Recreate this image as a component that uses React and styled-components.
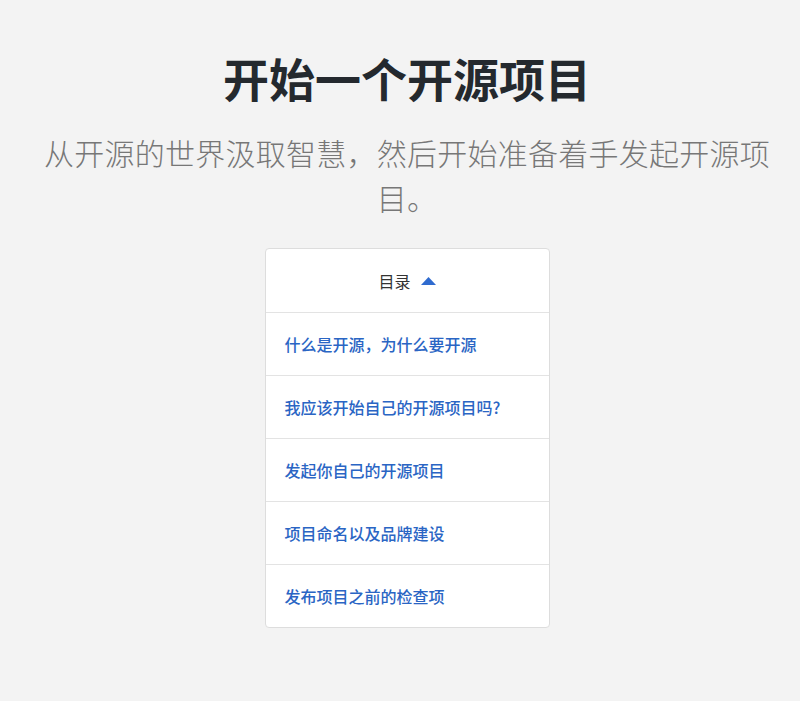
import React from 'react';
import styled, { createGlobalStyle } from 'styled-components';

const GlobalStyle = createGlobalStyle`
  body {
    margin: 0;
    background: #f3f3f3;
    font-family: "Noto Sans CJK SC", "Noto Sans", sans-serif;
  }
`;

const Hero = styled.div`
  display: flex;
  flex-direction: column;
  align-items: center;
  padding: 50px 20px 60px 34px;
`;

const Title = styled.h1`
  margin: 0;
  font-size: 46px;
  font-weight: 700;
  line-height: 1.2;
  color: #24292e;
`;

const Lead = styled.p`
  margin: 25px 0 0;
  max-width: 746px;
  text-align: center;
  font-size: 30px;
  font-weight: 200;
  line-height: 1.5;
  letter-spacing: 0.25px;
  color: #777;
`;

const Toc = styled.div`
  margin-top: 28px;
  width: 283px;
  background: #fff;
  border: 1px solid #ddd;
  border-radius: 4px;
`;

const TocHeader = styled.div`
  display: flex;
  align-items: center;
  justify-content: center;
  gap: 10px;
  height: 63px;
  font-size: 16px;
  color: #333;
`;

const TocItem = styled.a`
  display: flex;
  align-items: center;
  height: 62px;
  padding: 0 19px;
  border-top: 1px solid #e3e3e3;
  font-size: 16px;
  font-weight: 500;
  color: #2a65c4;
  text-decoration: none;
`;

const Caret = () => (
  <svg width="15" height="8" viewBox="0 0 15 8">
    <path d="M0 8 L7.5 0 L15 8 Z" fill="#2f6bcf" />
  </svg>
);

const items = [
  '什么是开源，为什么要开源',
  '我应该开始自己的开源项目吗?',
  '发起你自己的开源项目',
  '项目命名以及品牌建设',
  '发布项目之前的检查项',
];

export default function App() {
  return (
    <>
      <GlobalStyle />
      <Hero>
        <Title>开始一个开源项目</Title>
        <Lead>从开源的世界汲取智慧，然后开始准备着手发起开源项目。</Lead>
        <Toc>
          <TocHeader>
            目录 <Caret />
          </TocHeader>
          {items.map((t) => (
            <TocItem key={t} href="#">{t}</TocItem>
          ))}
        </Toc>
      </Hero>
    </>
  );
}
